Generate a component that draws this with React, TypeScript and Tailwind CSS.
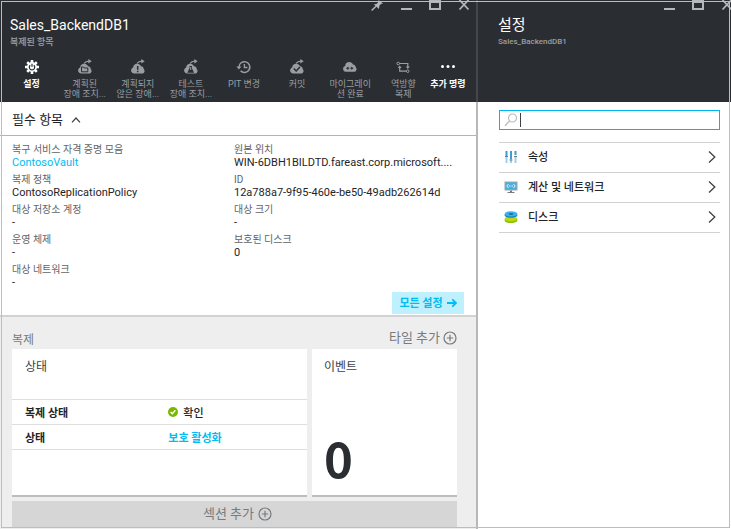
import { useState } from "react";
import type { ReactNode } from "react";

type IconProps = { children: ReactNode };

function ToolIcon({ children }: IconProps) {
  return (
    <svg viewBox="0 0 16 16" className="h-4 w-4 shrink-0" fill="none" aria-hidden="true">
      {children}
    </svg>
  );
}

const CLOUD = "M4 14.500a3 3 0 0 1-2.400-4.700 2.400 2.400 0 0 1 1.600-1.200C3.300 6 5 4.800 7.200 4.800c1.800 0 3.200.9 3.800 2.500 1.500.1 2.600 1.200 2.700 2.600 1.800 1.800.6 4.600-1.700 4.600z";

function CloudArrow({ children }: IconProps) {
  return (
    <ToolIcon>
      <path d={CLOUD} fill="currentColor" />
      <path d="M7 4.500C8.200 2.800 9.600 2.200 12 2.200" stroke="currentColor" strokeWidth="1.300" />
      <path d="M11.300 0l3.400 2.300-3.400 2.300z" fill="currentColor" />
      {children}
    </ToolIcon>
  );
}

const commands: { lines: string[]; active?: boolean; icon: ReactNode }[] = [
  {
    lines: ["설정"],
    active: true,
    icon: (
      <ToolIcon>
        <path
          d="M8 1v14M1 8h14M3.200 3.200l9.600 9.600M12.800 3.200l-9.600 9.600"
          stroke="currentColor"
          strokeWidth="2.600"
        />
        <circle cx="8" cy="8" r="5" fill="currentColor" />
        <path d="M6.200 6.200a2.700 2.700 0 1 0 3.600 0M8 4.800v3" stroke="#2a2e33" strokeWidth="1.200" />
      </ToolIcon>
    ),
  },
  {
    lines: ["계획된", "장애 조치..."],
    icon: (
      <CloudArrow>
        <path d="M4.500 8h2l.8 1h3.500v3.800H4.500z" stroke="#2a2e33" strokeWidth="1" />
      </CloudArrow>
    ),
  },
  {
    lines: ["계획되지", "않은 장애..."],
    icon: (
      <CloudArrow>
        <path d="M7.700 7v3.800M7.700 11.800v1.500" stroke="#2a2e33" strokeWidth="1.500" />
      </CloudArrow>
    ),
  },
  {
    lines: ["테스트", "장애 조치..."],
    icon: (
      <CloudArrow>
        <path d="M6.500 7h2.400v2.200l2.200 4.500H4.300l2.200-4.500z" fill="#2a2e33" />
        <path d="M7.700 8v3" stroke="currentColor" strokeWidth="1" />
      </CloudArrow>
    ),
  },
  {
    lines: ["PIT 변경"],
    icon: (
      <ToolIcon>
        <path d="M3 8a5.400 5.400 0 1 1 1.600 3.900" stroke="currentColor" strokeWidth="1.500" />
        <path d="M.4 7.500h5L2.900 10.600z" fill="currentColor" />
        <path d="M8.400 5v3.500h3" stroke="currentColor" strokeWidth="1.300" />
      </ToolIcon>
    ),
  },
  {
    lines: ["커밋"],
    icon: (
      <CloudArrow>
        <path d="M4.800 9.500l2.400 2.500 3.700-4" stroke="#2a2e33" strokeWidth="1.500" />
      </CloudArrow>
    ),
  },
  {
    lines: ["마이그레이", "션 완료"],
    icon: (
      <ToolIcon>
        <path
          d="M4 12.800a3 3 0 0 1-2.400-4.700 2.400 2.400 0 0 1 1.600-1.200C3.300 4.300 5 3.100 7.200 3.100c1.800 0 3.200.9 3.800 2.500 1.500.1 2.600 1.200 2.700 2.600 1.800 1.800.6 4.600-1.700 4.600z"
          fill="currentColor"
        />
        <path d="M6.300 7.500L4 9.200l2.300 1.700zM9.200 7.500l2.300 1.700-2.300 1.700z" fill="#2a2e33" />
        <path d="M6 9.200h1.300M8.300 9.200h1.500" stroke="#2a2e33" strokeWidth="1" />
      </ToolIcon>
    ),
  },
  {
    lines: ["역방향", "복제"],
    icon: (
      <ToolIcon>
        <path d="M4.500 4.500h8.300v4.200M11.500 12.200H4.700V7.800" stroke="currentColor" strokeWidth="1.200" />
        <circle cx="3.200" cy="4.500" r="1.300" stroke="currentColor" />
        <circle cx="12.700" cy="12.200" r="1.300" stroke="currentColor" />
        <path d="M10.800 7.600h4l-2 2.400zM2.700 8.900h4l-2-2.400z" fill="currentColor" />
      </ToolIcon>
    ),
  },
  {
    lines: ["추가 명령"],
    active: true,
    icon: (
      <ToolIcon>
        <circle cx="2.500" cy="7.500" r="1.500" fill="currentColor" />
        <circle cx="8" cy="7.500" r="1.500" fill="currentColor" />
        <circle cx="13.500" cy="7.500" r="1.500" fill="currentColor" />
      </ToolIcon>
    ),
  },
];

function WindowButton({ label, children }: { label: string; children: ReactNode }) {
  return (
    <button type="button" aria-label={label} className="h-3 w-3 shrink-0 text-[#b4b6b9]">
      <svg viewBox="0 0 12 12" className="h-3 w-3" fill="none" stroke="currentColor" aria-hidden="true">
        {children}
      </svg>
    </button>
  );
}

function WindowButtons({ pin }: { pin?: boolean }) {
  return (
    <div className="flex h-3 justify-end gap-[17px]">
      {pin && (
        <WindowButton label="고정">
          <path d="M7.500 0L12 3.500 9.800 4 8.300 6l-.3 3L2.800 4.300l2.700-.3L7.300 2z" fill="currentColor" stroke="none" />
          <path d="M5.300 6L.6 10.500" strokeWidth="1.400" />
        </WindowButton>
      )}
      <WindowButton label="최소화">
        <path d="M1 9h11" strokeWidth="2" />
      </WindowButton>
      <WindowButton label="최대화">
        <path d="M1 1h10v8H1z" strokeWidth="2" />
        <path d="M0 1.500h12" strokeWidth="3" />
      </WindowButton>
      <WindowButton label="닫기">
        <path d="M1.500 0l9 9.500M10.500 0l-9 9.500" strokeWidth="1.800" />
      </WindowButton>
    </div>
  );
}

function PlusCircle() {
  return (
    <svg viewBox="0 0 14 14" className="h-[14px] w-[14px]" fill="none" stroke="currentColor" aria-hidden="true">
      <circle cx="7" cy="7" r="6" strokeWidth="1.200" />
      <path d="M7 3.800v6.400M3.800 7h6.400" strokeWidth="1.200" />
    </svg>
  );
}

const leftFields = [
  { label: "복구 서비스 자격 증명 모음", value: "ContosoVault", link: true },
  { label: "복제 정책", value: "ContosoReplicationPolicy" },
  { label: "대상 저장소 계정", value: "-" },
  { label: "운영 체제", value: "-" },
  { label: "대상 네트워크", value: "-" },
];

const rightFields = [
  { label: "원본 위치", value: "WIN-6DBH1BILDTD.fareast.corp.microsoft...." },
  { label: "ID", value: "12a788a7-9f95-460e-be50-49adb262614d" },
  { label: "대상 크기", value: "-" },
  { label: "보호된 디스크", value: "0" },
];

function FieldList({ fields }: { fields: { label: string; value: string; link?: boolean }[] }) {
  return (
    <dl className="flex min-w-0 flex-col gap-1 whitespace-nowrap">
      {fields.map((field) => (
        <div key={field.label}>
          <dt className="text-[10px] leading-[13px] text-[#5f6468]">{field.label}</dt>
          <dd className="text-[11px] leading-[13px] text-[#1f2428]">
            {field.link ? (
              <a href="#vault" className="text-[#00bcf2]">
                {field.value}
              </a>
            ) : (
              field.value
            )}
          </dd>
        </div>
      ))}
    </dl>
  );
}

const settings = [
  {
    name: "속성",
    icon: (
      <>
        <path d="M2.500 1v5M7 1v8M11.500 1v4" stroke="#3b9fcf" strokeWidth="2" />
        <path d="M2.500 7v6M7 9v4M11.500 6v7" stroke="#9fcfe4" strokeWidth="2" />
        <path d="M1 6.500h3M5.500 10h3M10 6.500h3" stroke="#6b7f8a" strokeWidth="1" />
      </>
    ),
  },
  {
    name: "계산 및 네트워크",
    icon: (
      <>
        <path d="M.5 1.500h13v9H.5z" fill="#a0a5a8" />
        <path d="M1.500 2.500h11v7h-11z" fill="#45b0de" />
        <path d="M4.500 4L2.800 6l1.700 2M9.500 4l1.700 2-1.700 2" stroke="#e8f7fc" strokeWidth="1" />
        <path d="M5 6h4" stroke="#e8f7fc" strokeWidth="1" strokeDasharray="1 .5" />
        <path d="M6 10.500h2v1.500h2.500v1h-7v-1H6z" fill="#777c80" />
      </>
    ),
  },
  {
    name: "디스크",
    icon: (
      <>
        <path d="M.7 9v1.500c0 1.500 2.800 2.500 6.300 2.500s6.300-1 6.300-2.500V9z" fill="#86bd00" />
        <ellipse cx="7" cy="8.800" rx="6.300" ry="2.700" fill="#b8d815" />
        <path d="M.7 4v1.300C.7 6.800 3.500 7.800 7 7.800s6.300-1 6.300-2.500V4z" fill="#1580c4" />
        <ellipse cx="7" cy="3.900" rx="6.300" ry="2.700" fill="#3fb1e3" />
        <ellipse cx="7" cy="4" rx="2.500" ry="1" fill="#1472b8" />
      </>
    ),
  },
];

export default function App() {
  const [query, setQuery] = useState("");

  return (
    <div className="relative grid min-h-screen grid-cols-[478fr_253fr] overflow-hidden bg-white font-[Roboto,'Noto_Sans_CJK_KR',sans-serif] text-[#1f2428]">
      <section className="flex min-w-0 flex-col">
        <header className="h-[102px] border-r-2 border-[#44484c] bg-[#2a2e33]">
          <div className="pr-1.5">
            <WindowButtons pin />
          </div>
          <h1 className="pt-px pl-[10px] text-[14px] leading-6 text-white">Sales_BackendDB1</h1>
          <p className="pl-[10px] text-[9px] leading-[10px] font-bold text-[#8f9295]">복제된 항목</p>
          <nav className="mt-3 grid grid-cols-[repeat(8,53fr)_36fr] pr-[10px] pl-[5px]">
            {commands.map((command) => (
              <button
                key={command.lines.join(" ")}
                type="button"
                className={`flex flex-col items-center gap-1 text-[9px] leading-[10px] whitespace-nowrap ${
                  command.active ? "font-bold text-white" : "text-[#9b9ea1]"
                }`}
              >
                {command.icon}
                <span className="flex flex-col items-center">
                  {command.lines.map((line) => (
                    <span key={line}>{line}</span>
                  ))}
                </span>
              </button>
            ))}
          </nav>
        </header>

        <div className="flex grow flex-col border-r-2 border-[#b8b8b8]">
          <button
            type="button"
            aria-expanded="true"
            className="flex h-[34px] items-center gap-2 border-b border-[#b4b4b4] pt-0.5 pl-3 text-[13px]"
          >
            필수 항목
            <svg viewBox="0 0 10 6" className="h-1.5 w-2.5" fill="none" stroke="#3c4146" aria-hidden="true">
              <path d="M1 5.300l4-4.300 4 4.300" strokeWidth="1.200" />
            </svg>
          </button>

          <div className="grid grid-cols-[222fr_230fr] pt-[7px] pr-3 pl-3">
            <FieldList fields={leftFields} />
            <FieldList fields={rightFields} />
          </div>
          <div className="flex justify-end pt-[3px] pr-3 pb-px">
            <a
              href="#all-settings"
              className="flex h-[22px] w-[72px] items-center justify-center gap-1 bg-[#bff0fd] text-[11px] font-bold whitespace-nowrap text-[#00bcf2]"
            >
              <span className="pt-0.5">모든 설정</span>
              <svg viewBox="0 0 10 10" className="h-2.5 w-2.5" fill="none" stroke="currentColor" aria-hidden="true">
                <path d="M0 5h9M5.300 1.300L9 5 5.300 8.700" strokeWidth="1.800" />
              </svg>
            </a>
          </div>

          <div className="flex grow flex-col border-t-2 border-[#d2d2d2] bg-[#eeeeee] pr-[19px] pl-3">
            <div className="flex h-8 items-end justify-between pb-px text-[#777b7e]">
              <h2 className="text-[12px] leading-4">복제</h2>
              <button type="button" className="flex items-center gap-[3px] pb-0.5 text-[13px] leading-4">
                타일 추가
                <PlusCircle />
              </button>
            </div>

            <div className="grid h-[148px] grid-cols-[295fr_145fr] gap-[5px]">
              <article className="border-b-2 border-[#bdbdbd] bg-white">
                <h3 className="h-[50px] pt-2.5 pl-[13px] text-[12px] leading-4 text-[#3c4146]">상태</h3>
                <table className="w-full table-fixed border-collapse text-left text-[11px] leading-4">
                  <tbody>
                    <tr className="h-[25px] border-y border-[#dedede]">
                      <th scope="row" className="w-[53%] p-0 pt-1 pl-[13px] font-bold">
                        복제 상태
                      </th>
                      <td className="p-0 font-medium">
                        <span className="flex items-center gap-[5px]">
                          <svg viewBox="0 0 10 10" className="h-2.5 w-2.5" fill="none" aria-hidden="true">
                            <circle cx="5" cy="5" r="5" fill="#7ab800" />
                            <path d="M2.600 5l1.700 1.800 3.100-3.500" stroke="white" strokeWidth="1.400" />
                          </svg>
                          <span className="pt-1">확인</span>
                        </span>
                      </td>
                    </tr>
                    <tr className="h-[25px] border-y border-[#dedede]">
                      <th scope="row" className="p-0 pt-1 pl-[13px] font-bold">
                        상태
                      </th>
                      <td className="p-0 pt-1 font-bold">
                        <a href="#protection" className="text-[#00bcf2]">
                          보호 활성화
                        </a>
                      </td>
                    </tr>
                  </tbody>
                </table>
              </article>
              <article className="flex flex-col justify-between border-b-2 border-[#bdbdbd] bg-white pt-2.5 pb-2.5 pl-3">
                <h3 className="text-[12px] leading-4 text-[#3c4146]">이벤트</h3>
                <p className="font-['Noto_Sans_CJK_KR',sans-serif] text-[49px] leading-[56px] font-bold text-[#2a2e33]">0</p>
              </article>
            </div>

            <button
              type="button"
              className="mt-1 flex h-[26px] items-center justify-center gap-1 bg-[#d6d6d6] pl-1.5 text-[13px] text-[#777b7e]"
            >
              섹션 추가
              <PlusCircle />
            </button>
          </div>
        </div>
      </section>

      <section className="min-w-0">
        <header className="h-[102px] bg-[#2a2e33]">
          <div className="-mr-0.5">
            <WindowButtons />
          </div>
          <h1 className="pt-px pl-5 text-[15px] leading-6 text-white">설정</h1>
          <p className="pl-5 text-[8px] leading-[10px] font-medium text-[#9b9ea1]">Sales_BackendDB1</p>
        </header>
        <div className="pt-2 pr-[11px] pl-[21px]">
          <label className="flex h-5 items-center gap-0.5 border border-[#00b4ee] pl-1">
            <svg viewBox="0 0 14 14" className="h-[14px] w-[14px] shrink-0" fill="none" stroke="#b9bcbe" aria-hidden="true">
              <circle cx="8.500" cy="5" r="4" strokeWidth="1.200" />
              <path d="M5.600 8L1 12.800" strokeWidth="1.300" />
            </svg>
            <input
              type="text"
              autoFocus
              aria-label="설정 검색"
              value={query}
              onChange={(event) => setQuery(event.target.value)}
              className="h-[14px] min-w-0 grow border-l border-[#3c4146] text-[11px] caret-transparent outline-none"
            />
          </label>
          <ul className="mt-3 border-t border-[#d2d2d2]">
            {settings.map((item) => (
              <li key={item.name} className="border-b border-[#d2d2d2]">
                <a href="#setting" className="flex h-[29px] items-center pr-1 pb-0.5 pl-[5px] text-[11px] font-medium">
                  <svg viewBox="0 0 14 14" className="h-[14px] w-[14px] shrink-0" fill="none" aria-hidden="true">
                    {item.icon}
                  </svg>
                  <span className="grow pt-1 pl-2.5">{item.name}</span>
                  <svg viewBox="0 0 8 12" className="h-3 w-2" fill="none" stroke="#3c4146" aria-hidden="true">
                    <path d="M1 .6L6.800 6 1 11.400" strokeWidth="1.300" />
                  </svg>
                </a>
              </li>
            ))}
          </ul>
        </div>
      </section>

      <div className="pointer-events-none absolute inset-px border border-[#bdbdbd]" />
    </div>
  );
}
